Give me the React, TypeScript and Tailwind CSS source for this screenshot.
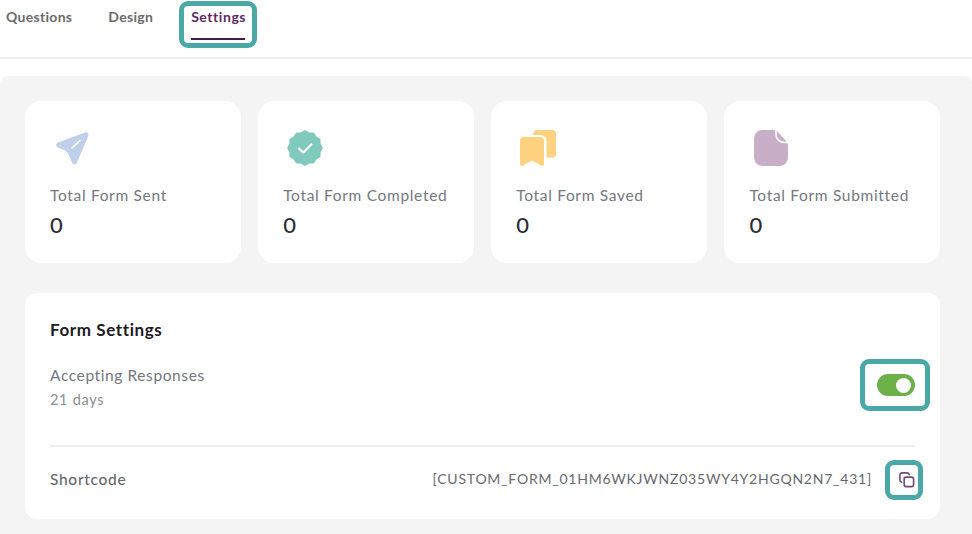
import { ReactNode } from 'react'

const badgePoints = Array.from({ length: 24 }, (_, i) => {
  const r = i % 2 === 0 ? 16.8 : 15.1
  const a = (i * Math.PI) / 12
  return `${(18 + r * Math.sin(a)).toFixed(2)},${(18 - r * Math.cos(a)).toFixed(2)}`
}).join(' ')

const stats: { label: string; icon: ReactNode }[] = [
  {
    label: 'Total Form Sent',
    icon: (
      <svg width="36" height="36" viewBox="0 0 36 36" fill="none">
        <path d="M31 2.500 4 12.500C1.500 13.500 1.500 16.500 4 17.500L10 20C12.500 21 13.800 22.500 14.800 25L18 32.500C19 35 22 35 23 32.500L34.500 5.500C35.300 3.500 33.300 1.700 31 2.500Z" fill="#c0d0ea" />
        <path d="M18 18 26 10.500" stroke="#fff" strokeWidth="1.600" strokeLinecap="round" />
      </svg>
    ),
  },
  {
    label: 'Total Form Completed',
    icon: (
      <svg width="36" height="36" viewBox="0 0 36 36" fill="none">
        <polygon points={badgePoints} fill="#7fcabd" stroke="#7fcabd" strokeWidth="2" strokeLinejoin="round" />
        <path d="M12 18.500l4.300 4 8-8" stroke="#fff" strokeWidth="2.200" strokeLinecap="round" strokeLinejoin="round" />
      </svg>
    ),
  },
  {
    label: 'Total Form Saved',
    icon: (
      <svg width="36" height="36" viewBox="0 0 36 36" fill="none">
        <path d="M13 5C13 2 14.500 0 17 0H32C34.500 0 36 1.500 36 4V25C36 27 34 28 26.500 27.500V11C26.500 7.500 24 5 20.500 5Z" fill="#ffd27f" />
        <path d="M4 7h16c2.500 0 4 1.500 4 4v23c0 1.500-1.500 2.200-2.800 1.500L12 30.500 3 35.500C1.500 36.200 0 35.500 0 34V11c0-2.500 1.500-4 4-4Z" fill="#ffd27f" />
      </svg>
    ),
  },
  {
    label: 'Total Form Submitted',
    icon: (
      <svg width="36" height="36" viewBox="0 0 36 36" fill="none">
        <path d="M9 0h14l12 13v14c0 5-3.500 9-8.500 9H9.500C4.500 36 1 32 1 27V9c0-5 3.500-9 8-9Z" fill="#c9aec8" />
        <path d="M23 0v4c0 5 3.500 8.500 8.500 8.500H35.500" stroke="#fff" strokeWidth="1.600" />
      </svg>
    ),
  },
]

function Highlight({ className }: { className: string }) {
  return <div className={`absolute rounded-[9px] border-[5px] border-[#4aa8a6] pointer-events-none ${className}`} />
}

export default function App() {
  return (
    <div className="relative h-[534px] w-[972px] overflow-hidden bg-white font-['Lato',sans-serif]">
      <div className="flex h-[59px] border-b-2 border-[#eeeeee] pl-[6px] pt-[9px] text-[14px] font-bold tracking-[0.3px] text-[#6b6b6b]">
        <span className="leading-4">Questions</span>
        <span className="ml-[36px] leading-4">Design</span>
        <div className="ml-[38px] flex h-[31px] w-[54px] flex-col justify-between">
          <span className="leading-4 tracking-[0.55px] text-[#5b2a63]">Settings</span>
          <div className="h-[2px] w-[54px] bg-[#451a4e]" />
        </div>
      </div>

      <div className="mt-[17px] h-[460px] rounded-t-lg bg-[#f4f4f4] pl-[25px] pr-[32px] pt-[25px]">
        <div className="grid grid-cols-4 gap-[17.5px]">
          {stats.map(s => (
            <div key={s.label} className="h-[162px] rounded-2xl bg-white pl-[25px] pt-[29px]">
              <div className="ml-[4px] h-[36px]">{s.icon}</div>
              <p className="mt-[19px] text-[15.500px] leading-5 tracking-[0.68px] text-[#737880]">{s.label}</p>
              <p className="mt-[8px] text-[22px] font-medium leading-6 text-[#2b2b33]">0</p>
            </div>
          ))}
        </div>

        <div className="mt-[30px] h-[226px] rounded-xl bg-white px-[25px] pt-[27px]">
          <h2 className="text-[17px] font-bold leading-5 tracking-[0.6px] text-[#1c1c22]">Form Settings</h2>
          <div className="mt-[25px] flex h-[82px] items-start justify-between border-b-2 border-[#eeeeee]">
            <div>
              <p className="text-[15.500px] leading-5 tracking-[0.6px] text-[#73767c]">Accepting Responses</p>
              <p className="mt-[5px] text-[14.500px] leading-5 tracking-[0.7px] text-[#8b8e93]">21 days</p>
            </div>
            <div className="relative mt-[9px] h-[22px] w-[38px] rounded-full bg-[#6cb04a]">
              <div className="absolute right-[4px] top-[3.500px] h-[15px] w-[15px] rounded-full bg-white" />
            </div>
          </div>
          <div className="mt-[22px] flex items-center justify-between">
            <span className="text-[15.500px] font-medium leading-5 tracking-[0.7px] text-[#66696f]">Shortcode</span>
            <div className="flex items-center gap-[26px]">
              <span className="text-[14px] leading-5 tracking-[0.77px] text-[#66696f]">[CUSTOM_FORM_01HM6WKJWNZ035WY4Y2HGQN2N7_431]</span>
              <svg width="17" height="17" viewBox="0 0 18 18" fill="none" stroke="#6f4a78" strokeWidth="1.700">
                <rect x="6.500" y="6.500" width="10" height="10" rx="2.200" />
                <path d="M3.800 12C2.600 11.500 2 10.700 2 9.500V4.500C2 3 3 2 4.500 2h5c1.200 0 2 .6 2.500 1.800" strokeLinecap="round" />
              </svg>
            </div>
          </div>
        </div>
      </div>

      <Highlight className="left-[179px] top-[1px] h-[47px] w-[78px]" />
      <Highlight className="left-[860px] top-[359px] h-[52px] w-[70px]" />
      <Highlight className="left-[885px] top-[460px] h-[40px] w-[38px]" />
    </div>
  )
}
